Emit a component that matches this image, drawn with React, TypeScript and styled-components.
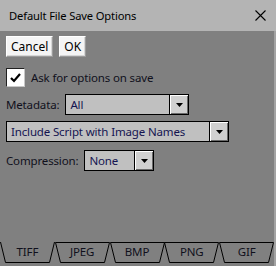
import React from 'react'
import styled, { createGlobalStyle } from 'styled-components'

const GlobalStyle = createGlobalStyle`
  html, body {
    margin: 0;
    padding: 0;
    background: #808080;
  }
  body {
    font-family: 'Noto Sans', 'Liberation Sans', sans-serif;
    font-size: 11.5px;
    letter-spacing: -0.15px;
    color: #000;
  }
`

const Window = styled.div`
  width: 276px;
  height: 266px;
  display: flex;
  flex-direction: column;
  overflow: hidden;
`

const TitleBar = styled.div`
  height: 31px;
  flex: none;
  background: #b4b4b4;
  display: flex;
  align-items: center;
  justify-content: space-between;
  padding: 0 10px 0 9px;
  box-sizing: border-box;
  font-size: 11.2px;
  color: #000;
`

const Body = styled.div`
  flex: 1;
  display: flex;
  flex-direction: column;
  background: #808080;
  border-right: 2px solid #a2a2a2;
  padding-bottom: 3px;
`

const Content = styled.div`
  display: flex;
  flex-direction: column;
  align-items: flex-start;
  padding: 5px 6px 0;
`

const ButtonRow = styled.div`
  display: flex;
  gap: 6px;
`

const Button = styled.button`
  height: 21px;
  padding: 0 4px;
  font: inherit;
  font-size: 12px;
  letter-spacing: 0;
  color: #000;
  background: #f4f4f4;
  border: 1px solid;
  border-color: #ffffff #9a9a9a #9a9a9a #ffffff;
  box-shadow: inset -1px -1px 0 #d6d6d6;
  line-height: 17px;
`

const CheckRow = styled.label`
  display: flex;
  align-items: center;
  gap: 6px;
  margin-top: 11px;
`

const CheckBox = styled.span`
  width: 19px;
  height: 19px;
  box-sizing: border-box;
  background: #fff;
  border: 1px solid;
  border-color: #202020 #c8c8c8 #c8c8c8 #202020;
  display: flex;
  align-items: center;
  justify-content: center;
`

const FieldRow = styled.div<{ $mt: number }>`
  display: flex;
  align-items: center;
  gap: 6px;
  margin-top: ${(p) => p.$mt}px;
`

const Label = styled.span`
  color: #10101c;
`

const Select = styled.div<{ $width: number; $mt?: number }>`
  width: ${(p) => p.$width}px;
  height: 21px;
  box-sizing: border-box;
  border: 1px solid #000;
  background: #c0c0c0;
  display: flex;
  margin-top: ${(p) => p.$mt ?? 0}px;
`

const SelectText = styled.span`
  flex: 1;
  padding-left: 4px;
  line-height: 19px;
  color: #141450;
  white-space: nowrap;
`

const DropButton = styled.span`
  width: 19px;
  flex: none;
  border-left: 1px solid #000;
  box-sizing: border-box;
  background: #d0d0d0;
  box-shadow: inset 1px 1px 0 #ffffff, inset -1px -1px 0 #6a6a6a;
  display: flex;
  align-items: center;
  justify-content: center;
`

const TabBar = styled.div`
  margin-top: auto;
  display: flex;
`

const Tab = styled.div<{ $width: number }>`
  position: relative;
  width: ${(p) => p.$width}px;
  height: 21px;
  display: flex;
  align-items: center;
  justify-content: center;
  padding-bottom: 3px;
  box-sizing: border-box;
  color: #10101c;

  svg {
    position: absolute;
    left: 0;
    top: 0;
  }
`

const TabText = styled.span`
  position: relative;
`

const Arrow = () => (
  <svg width="7" height="4" viewBox="0 0 7 4">
    <polygon points="0,0 7,0 3.5,4" fill="#000" />
  </svg>
)

const DropSelect: React.FC<{ value: string; width: number; mt?: number }> = ({ value, width, mt }) => (
  <Select $width={width} $mt={mt}>
    <SelectText>{value}</SelectText>
    <DropButton>
      <Arrow />
    </DropButton>
  </Select>
)

const tabs = ['TIFF', 'JPEG', 'BMP', 'PNG', 'GIF']

const TabShape: React.FC<{ w: number; selected: boolean }> = ({ w, selected }) =>
  selected ? (
    <svg width={w} height={21}>
      <polyline
        points={`0.5,0 5.5,20.5 ${w - 5.5},20.5 ${w - 0.5},0`}
        fill="none"
        stroke="#000"
        strokeWidth="1"
      />
    </svg>
  ) : (
    <svg width={w} height={21}>
      <polygon
        points={`0.5,0.5 ${w - 0.5},0.5 ${w - 5.5},20.5 5.5,20.5`}
        fill="none"
        stroke="#000"
        strokeWidth="1"
      />
    </svg>
  )

export default function App() {
  return (
    <Window>
      <GlobalStyle />
      <TitleBar>
        <span>Default File Save Options</span>
        <svg width="11" height="11" viewBox="0 0 11 11">
          <path d="M0.5 0.5 L10.5 10.5 M10.5 0.5 L0.5 10.5" stroke="#000" strokeWidth="1.1" />
        </svg>
      </TitleBar>
      <Body>
        <Content>
          <ButtonRow>
            <Button>Cancel</Button>
            <Button>OK</Button>
          </ButtonRow>
          <CheckRow>
            <CheckBox>
              <svg width="11" height="10" viewBox="0 0 11 10">
                <polyline points="1,5 4,8 10,1" fill="none" stroke="#000" strokeWidth="2.2" />
              </svg>
            </CheckBox>
            <Label>Ask for options on save</Label>
          </CheckRow>
          <FieldRow $mt={7}>
            <Label>Metadata:</Label>
            <DropSelect value="All" width={124} />
          </FieldRow>
          <DropSelect value="Include Script with Image Names" width={223} mt={6} />
          <FieldRow $mt={8}>
            <Label>Compression:</Label>
            <DropSelect value="None" width={70} />
          </FieldRow>
        </Content>
        <TabBar>
          {tabs.map((t, i) => (
            <Tab key={t} $width={55}>
              <TabShape w={55} selected={i === 0} />
              <TabText>{t}</TabText>
            </Tab>
          ))}
        </TabBar>
      </Body>
    </Window>
  )
}
